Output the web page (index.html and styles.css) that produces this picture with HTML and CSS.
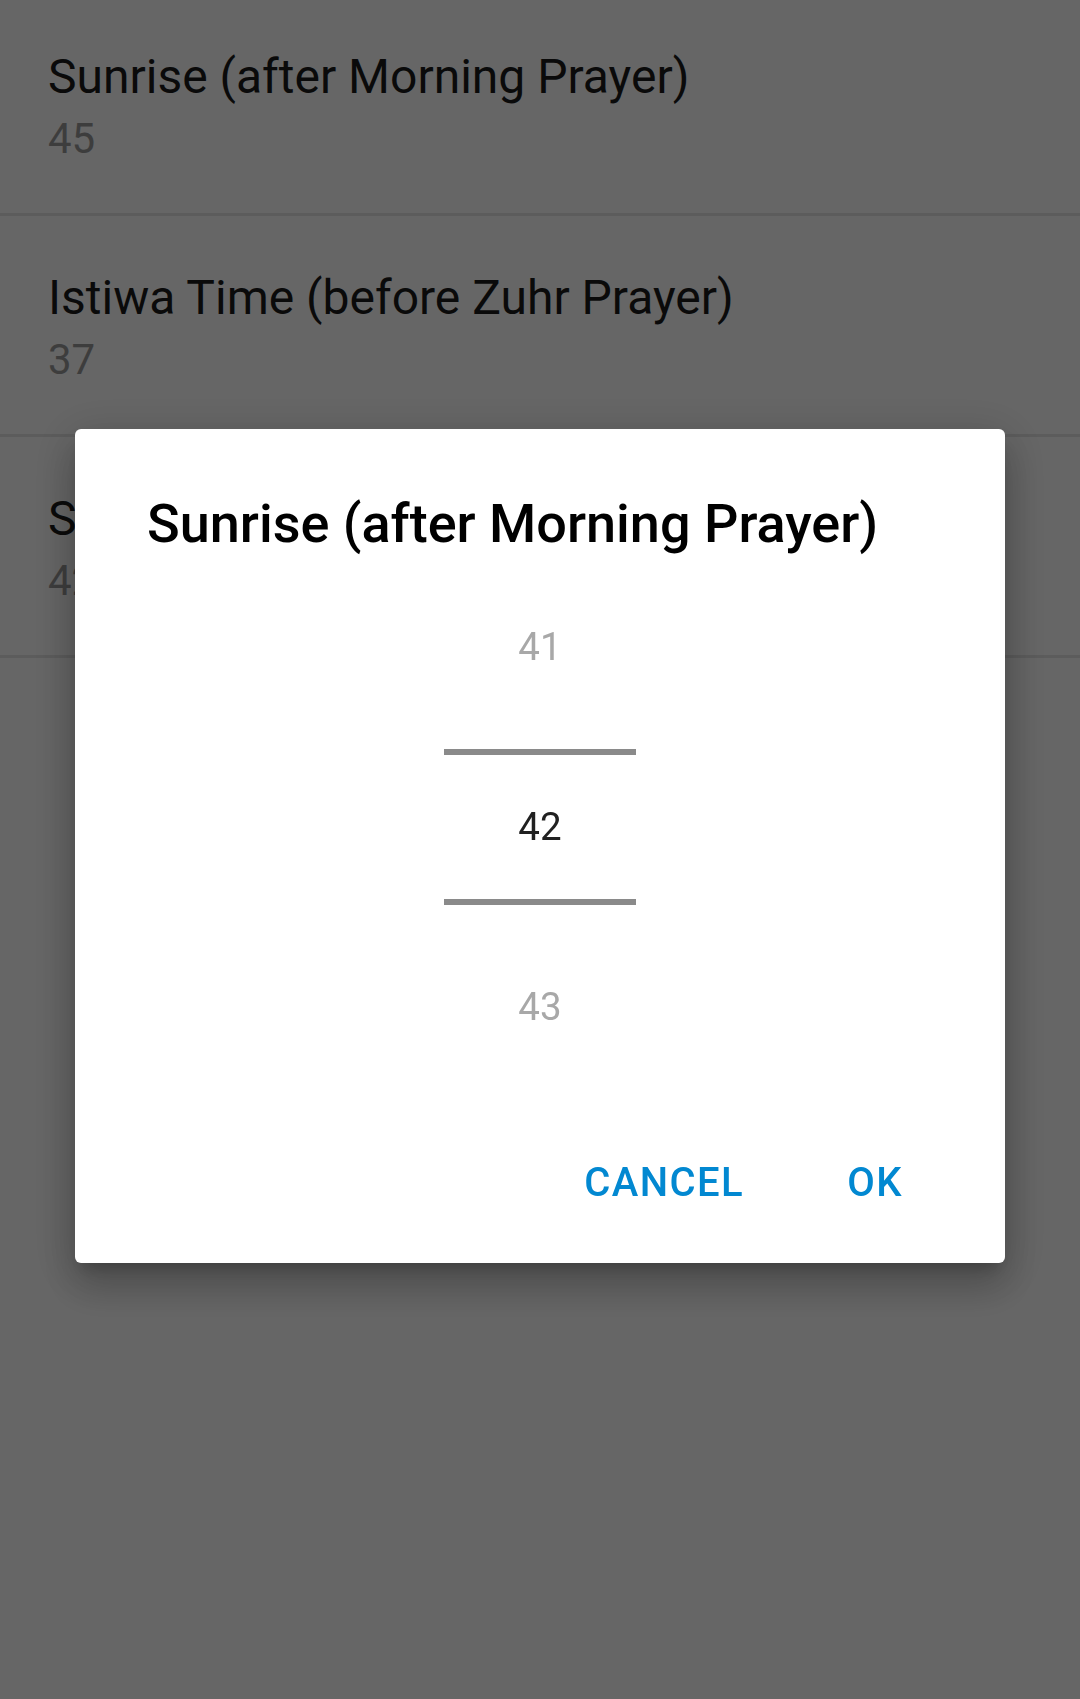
FILE: index.html
```html
<!DOCTYPE html>
<html lang="en">
<head>
<meta charset="utf-8">
<title>Prayer time adjustments</title>
<link rel="stylesheet" href="styles.css">
</head>
<body>
<main class="list">
  <div class="row">
    <div class="row-title">Sunrise (after Morning Prayer)</div>
    <div class="row-value">45</div>
  </div>
  <div class="row">
    <div class="row-title">Istiwa Time (before Zuhr Prayer)</div>
    <div class="row-value">37</div>
  </div>
  <div class="row">
    <div class="row-title">Sunset (before Maghrib Prayer)</div>
    <div class="row-value">42</div>
  </div>
</main>

<div class="scrim">
  <section class="dialog" role="dialog" aria-label="Sunrise (after Morning Prayer)">
    <h1 class="dialog-title">Sunrise (after Morning Prayer)</h1>
    <div class="picker">
      <div class="picker-item dim">41</div>
      <div class="picker-item selected"><span class="picker-frame">42</span></div>
      <div class="picker-item dim">43</div>
    </div>
    <div class="actions">
      <button class="btn btn-cancel">Cancel</button>
      <button class="btn btn-ok">OK</button>
    </div>
  </section>
</div>
</body>
</html>
```

FILE: styles.css
```css
html, body {
  margin: 0;
  padding: 0;
}

body {
  width: 1080px;
  height: 1699px;
  background: #ffffff;
  font-family: Roboto, "Noto Sans", "Liberation Sans", sans-serif;
  overflow: hidden;
}

.list {
  margin-top: -5px;
}

.row {
  height: 218px;
  box-sizing: content-box;
  border-bottom: 3px solid #e6e6e6;
  padding-left: 48px;
  display: flex;
  flex-direction: column;
}

.row-title {
  margin-top: 55px;
  font-size: 48px;
  line-height: 54px;
  color: #1a1a1a;
}

.row-value {
  margin-top: 11px;
  font-size: 42px;
  line-height: 48px;
  color: #9a9a9a;
}

.scrim {
  position: fixed;
  inset: 0;
  background: rgba(0, 0, 0, 0.6);
  display: flex;
  justify-content: center;
  align-items: flex-start;
  padding-top: 429px;
}

.dialog {
  width: 930px;
  height: 834px;
  box-sizing: border-box;
  background: #ffffff;
  border-radius: 6px;
  box-shadow: 0 24px 38px 3px rgba(0, 0, 0, 0.16),
              0 9px 46px 8px rgba(0, 0, 0, 0.14),
              0 11px 15px -7px rgba(0, 0, 0, 0.22);
  padding-top: 63px;
  display: flex;
  flex-direction: column;
}

.dialog-title {
  margin: 0;
  padding-left: 72px;
  font-size: 54px;
  line-height: 64px;
  font-weight: 500;
  color: #000000;
}

.picker {
  margin-top: 1px;
  display: flex;
  flex-direction: column;
  align-items: center;
}

.picker-item {
  height: 180px;
  display: flex;
  align-items: center;
  justify-content: center;
  font-size: 38.5px;
  line-height: 46px;
}

.picker-item.dim {
  color: #a8a8a8;
}

.picker-item.selected {
  color: #212121;
}

.picker-frame {
  width: 192px;
  height: 144px;
  border-top: 6px solid #8a8a8a;
  border-bottom: 6px solid #8a8a8a;
  display: flex;
  align-items: center;
  justify-content: center;
  margin-bottom: 1px;
}

.actions {
  margin-top: 63px;
  display: flex;
  justify-content: flex-end;
  gap: 23px;
  padding-right: 42px;
}

.btn {
  border: none;
  background: transparent;
  padding: 0 20px;
  min-width: 176px;
  font-family: Roboto, "Noto Sans", "Liberation Sans", sans-serif;
  font-size: 40px;
  line-height: 46px;
  font-weight: 500;
  text-transform: uppercase;
  letter-spacing: 0.035em;
  color: #0288d1;
  cursor: pointer;
}
```
